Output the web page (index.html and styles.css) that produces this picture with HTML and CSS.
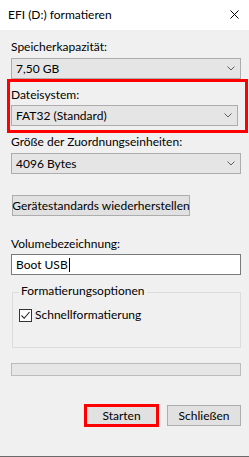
FILE: index.html
```html
<!DOCTYPE html>
<html lang="de">
<head>
<meta charset="utf-8">
<title>EFI (D:) formatieren</title>
<link rel="stylesheet" href="styles.css">
</head>
<body>
<div class="window">
  <div class="titlebar">
    <span class="title">EFI (D:) formatieren</span>
    <svg class="close" width="9" height="9" viewBox="0 0 9 9"><path d="M0.5 0.5 L8.5 8.5 M8.5 0.5 L0.5 8.5" stroke="#000" stroke-width="1"/></svg>
  </div>
  <div class="content">
    <div class="field f1">
      <div class="label">Speicherkapazität:</div>
      <div class="select"><span>7,50 GB</span><svg class="chev" width="8" height="5" viewBox="0 0 8 5"><path d="M0.5 0.5 L4 4 L7.5 0.5" fill="none" stroke="#606060" stroke-width="1"/></svg></div>
    </div>
    <div class="highlight">
      <div class="label">Dateisystem:</div>
      <div class="select"><span>FAT32 (Standard)</span><svg class="chev" width="8" height="5" viewBox="0 0 8 5"><path d="M0.5 0.5 L4 4 L7.5 0.5" fill="none" stroke="#606060" stroke-width="1"/></svg></div>
    </div>
    <div class="field f3">
      <div class="label">Größe der Zuordnungseinheiten:</div>
      <div class="select"><span>4096 Bytes</span><svg class="chev" width="8" height="5" viewBox="0 0 8 5"><path d="M0.5 0.5 L4 4 L7.5 0.5" fill="none" stroke="#606060" stroke-width="1"/></svg></div>
    </div>
    <div class="btn restore">Gerätestandards wiederherstellen</div>
    <div class="field f4">
      <div class="label">Volumebezeichnung:</div>
      <div class="input"><span>Boot USB</span><span class="caret"></span></div>
    </div>
    <div class="group">
      <div class="legend">Formatierungsoptionen</div>
      <div class="check-row">
        <span class="checkbox"><svg width="11" height="11" viewBox="0 0 11 11"><path d="M1.5 5.5 L4.2 8.3 L9.5 2" fill="none" stroke="#222" stroke-width="1.1"/></svg></span>
        <span>Schnellformatierung</span>
      </div>
    </div>
    <div class="progress"></div>
    <div class="actions">
      <div class="btn start">Starten</div>
      <div class="btn closebtn">Schließen</div>
    </div>
  </div>
  <div class="bottomline"></div>
</div>
</body>
</html>
```
FILE: styles.css
```css
* { box-sizing: border-box; }
html, body { margin: 0; padding: 0; }
body {
  width: 249px;
  height: 457px;
  background: #f0f0f0;
  font-family: Lato, "Liberation Sans", sans-serif;
  font-size: 12px;
  color: #000;
  overflow: hidden;
}
.window {
  height: 457px;
  display: flex;
  flex-direction: column;
}
.titlebar {
  height: 30px;
  background: #fff;
  display: flex;
  align-items: center;
  justify-content: space-between;
  padding: 0 10px 0 8px;
  flex-shrink: 0;
}
.title { line-height: 16px; }
.close { display: block; margin-top: -2px; }
.content {
  flex: 1;
  padding: 0 8px 0 11px;
}
.label {
  line-height: 16px;
  height: 16px;
  white-space: nowrap;
}
.select {
  height: 21px;
  background: #e5e5e5;
  border: 1px solid #adadad;
  display: flex;
  align-items: center;
  justify-content: space-between;
  padding: 0 5px 0 4px;
  line-height: 16px;
}
.chev { display: block; }
.f1 { margin-top: 9px; }
.f1 .label { margin-bottom: 3px; }
.highlight {
  margin: 0 -7px 0 -4px;
  border: 3px solid #ff0000;
  padding: 5px 4px 4px 1px;
}
.highlight .label { margin-bottom: 2px; }
.highlight .select { margin-right: 3px; }
.f3 { margin-top: 1px; }
.f3 .label { margin-bottom: 3px; }
.btn {
  background: #e1e1e1;
  border: 1px solid #adadad;
  display: flex;
  align-items: center;
  justify-content: center;
  line-height: 16px;
  white-space: nowrap;
}
.restore {
  margin-top: 21px;
  margin-left: 1px;
  width: 178px;
  height: 21px;
}
.f4 { margin-top: 20px; }
.f4 .label { margin-bottom: 2px; }
.input {
  height: 21px;
  background: #fff;
  border: 1px solid #7a7a7a;
  display: flex;
  align-items: center;
  padding: 0 0 0 4px;
  line-height: 16px;
}
.caret {
  display: inline-block;
  width: 1px;
  height: 14px;
  background: #000;
  margin-left: 1px;
}
.group {
  margin-top: 17px;
  margin-left: 1px;
  height: 56px;
  border: 1px solid #dcdcdc;
  position: relative;
  padding: 14px 0 0 6px;
}
.legend {
  position: absolute;
  top: -10px;
  left: 6px;
  padding: 0 2px;
  background: #f0f0f0;
  line-height: 16px;
}
.check-row {
  display: flex;
  align-items: center;
  gap: 3px;
  line-height: 16px;
}
.checkbox {
  width: 13px;
  height: 13px;
  border: 1px solid #333;
  background: #fff;
  display: flex;
  align-items: center;
  justify-content: center;
}
.checkbox svg { display: block; }
.progress {
  margin-top: 15px;
  height: 13px;
  background: #e6e6e6;
  border: 1px solid #bcbcbc;
}
.actions {
  margin-top: 28px;
  display: flex;
  align-items: center;
  padding-left: 73px;
  gap: 8px;
}
.start {
  width: 75px;
  height: 23px;
  border: 3px solid #ff0000;
}
.closebtn {
  width: 74px;
  height: 21px;
}
.bottomline {
  height: 1px;
  background: #6a6a6a;
  flex-shrink: 0;
}
```
